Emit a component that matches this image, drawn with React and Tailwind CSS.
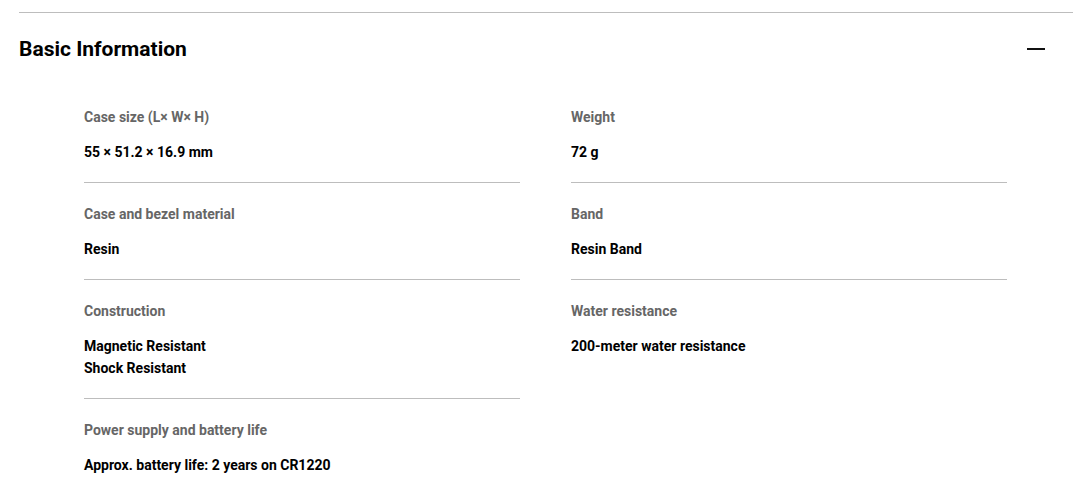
const leftSpecs = [
  { label: 'Case size (L× W× H)', values: ['55 × 51.2 × 16.9 mm'] },
  { label: 'Case and bezel material', values: ['Resin'] },
  { label: 'Construction', values: ['Magnetic Resistant', 'Shock Resistant'] },
  { label: 'Power supply and battery life', values: ['Approx. battery life: 2 years on CR1220'] },
];

const rightSpecs = [
  { label: 'Weight', values: ['72 g'] },
  { label: 'Band', values: ['Resin Band'] },
  { label: 'Water resistance', values: ['200-meter water resistance'] },
];

const SpecItem = ({ label, values }) => (
  <div className="pt-[21px] pb-[19px] border-b border-[#bdbdbd] last:border-b-0">
    <div className="text-[14px] leading-[20px] font-bold text-[#666666]">{label}</div>
    <div className="mt-[14px] text-[14px] leading-[22px] font-bold text-black">
      {values.map((v) => (
        <div key={v}>{v}</div>
      ))}
    </div>
  </div>
);

const App = () => {
  return (
    <div
      className="bg-white min-h-screen pt-[12px]"
      style={{ fontFamily: 'Roboto, "Liberation Sans", sans-serif' }}
    >
      <section className="ml-[19px] mr-[9px] border-t border-[#bdbdbd]">
        {/* Header */}
        <div className="flex items-center justify-between pt-[21px] pr-[28px]">
          <h2 className="text-[21px] leading-[30px] font-bold text-black">Basic Information</h2>
          <span className="block w-[18px] h-[2px] bg-[#111]" />
        </div>

        {/* Specs */}
        <div className="mt-[22px] ml-[65px] w-[923px] grid grid-cols-2 gap-x-[51px] items-start">
          <div className="flex flex-col">
            {leftSpecs.map((s) => (
              <SpecItem key={s.label} {...s} />
            ))}
          </div>
          <div className="flex flex-col">
            {rightSpecs.map((s) => (
              <SpecItem key={s.label} {...s} />
            ))}
          </div>
        </div>
      </section>
    </div>
  );
};

export default App;
